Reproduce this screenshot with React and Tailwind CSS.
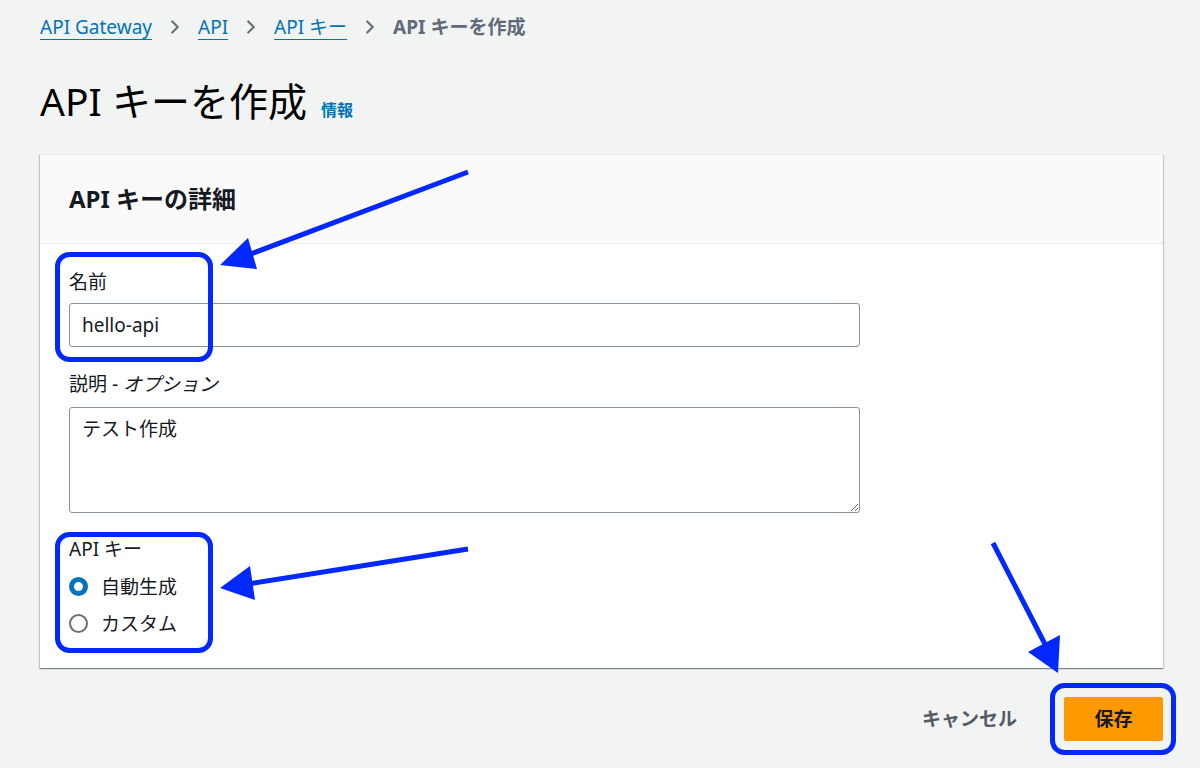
import React from "react";
import { ChevronRight } from "lucide-react";

const FONT = "font-['Noto_Sans','Noto_Sans_CJK_JP',sans-serif]";

function Crumb({ children, last }) {
  if (last) return <span className="font-bold text-[#5f6b7a]">{children}</span>;
  return (
    <>
      <a className="text-[#0073bb] underline decoration-1 underline-offset-[5px]">{children}</a>
      <ChevronRight size={22} strokeWidth={2.4} className="mx-[12px] text-[#687078]" />
    </>
  );
}

function Radio({ checked, label }) {
  return (
    <label className="flex h-[37px] items-center gap-[13px]">
      {checked ? (
        <span className="h-[19px] w-[19px] rounded-full border-[5px] border-[#0073bb] bg-white" />
      ) : (
        <span className="h-[19px] w-[19px] rounded-full border-2 border-[#687078] bg-white" />
      )}
      <span>{label}</span>
    </label>
  );
}

// blue review marks drawn over the form
function Annotations() {
  const c = "#0028ff";
  return (
    <svg className="pointer-events-none absolute inset-0" width="1200" height="768">
      <rect x="57.5" y="254.5" width="153" height="105" rx="12" fill="none" stroke={c} strokeWidth="5" />
      <rect x="57.5" y="534.5" width="153" height="116" rx="12" fill="none" stroke={c} strokeWidth="5" />
      <rect x="1052.5" y="685.5" width="121" height="67" rx="12" fill="none" stroke={c} strokeWidth="5" />
      <line x1="468" y1="172" x2="248" y2="255" stroke={c} strokeWidth="5" />
      <polygon points="220,265 248,238 257,269" fill={c} />
      <line x1="468" y1="549" x2="248" y2="584" stroke={c} strokeWidth="5" />
      <polygon points="220,588 250,566 255,600" fill={c} />
      <line x1="993" y1="543" x2="1048" y2="650" stroke={c} strokeWidth="5" />
      <polygon points="1058,673 1028,652 1060,635" fill={c} />
    </svg>
  );
}

export default function App() {
  return (
    <div className={`relative h-[768px] w-[1200px] overflow-hidden bg-[#f2f3f3] text-[#16191f] ${FONT}`}>
      <div className="ml-[40px] w-[1123px]">
        <nav className="mt-[14px] flex h-[26px] items-center text-[19px] leading-[26px]">
          <Crumb>API Gateway</Crumb>
          <Crumb>API</Crumb>
          <Crumb>API キー</Crumb>
          <Crumb last>API キーを作成</Crumb>
        </nav>

        <div className="mt-[39px] flex h-[44px] items-baseline gap-[14px]">
          <h1 className="text-[39px] leading-[44px] font-normal text-[#000000]">API キーを作成</h1>
          <a className="text-[16px] font-bold text-[#0073bb]">情報</a>
        </div>

        <section className="mt-[31px] border-t border-[#eaeded] bg-white shadow-[0_1px_1px_0_rgba(0,28,36,0.3),1px_1px_1px_0_rgba(0,28,36,0.15),-1px_1px_1px_0_rgba(0,28,36,0.15)]">
          <header className="flex h-[89px] items-center border-b border-[#eaeded] bg-[#fafafa] px-[29px]">
            <h2 className="text-[24px] font-bold leading-[32px]">API キーの詳細</h2>
          </header>

          <div className="px-[29px] pt-[25px] pb-[26px] text-[19px] leading-[26px]">
            <div className="mb-[8px]">名前</div>
            <input
              readOnly
              defaultValue="hello-api"
              className="h-[44px] w-[791px] rounded-[3px] border border-[#879596] px-[12px] text-[19px] outline-none"
            />

            <div className="mt-[24px] mb-[10px]">
              説明 - <span className="italic">オプション</span>
            </div>
            <textarea
              readOnly
              defaultValue="テスト作成"
              className="block h-[106px] w-[791px] rounded-[3px] border border-[#879596] px-[12px] py-[8px] text-[19px] leading-[26px] outline-none"
            />

            <div className="mt-[23px]">API キー</div>
            <div className="mt-[6px] flex flex-col">
              <Radio checked label="自動生成" />
              <Radio label="カスタム" />
            </div>
          </div>
        </section>

        <div className="mt-[29px] flex items-center justify-end gap-[47px] text-[19px] font-bold">
          <button className="text-[#545b64]">キャンセル</button>
          <button className="h-[44px] w-[99px] rounded-[2px] bg-[#ff9900] text-[#16191f]">保存</button>
        </div>
      </div>
      <Annotations />
    </div>
  );
}
